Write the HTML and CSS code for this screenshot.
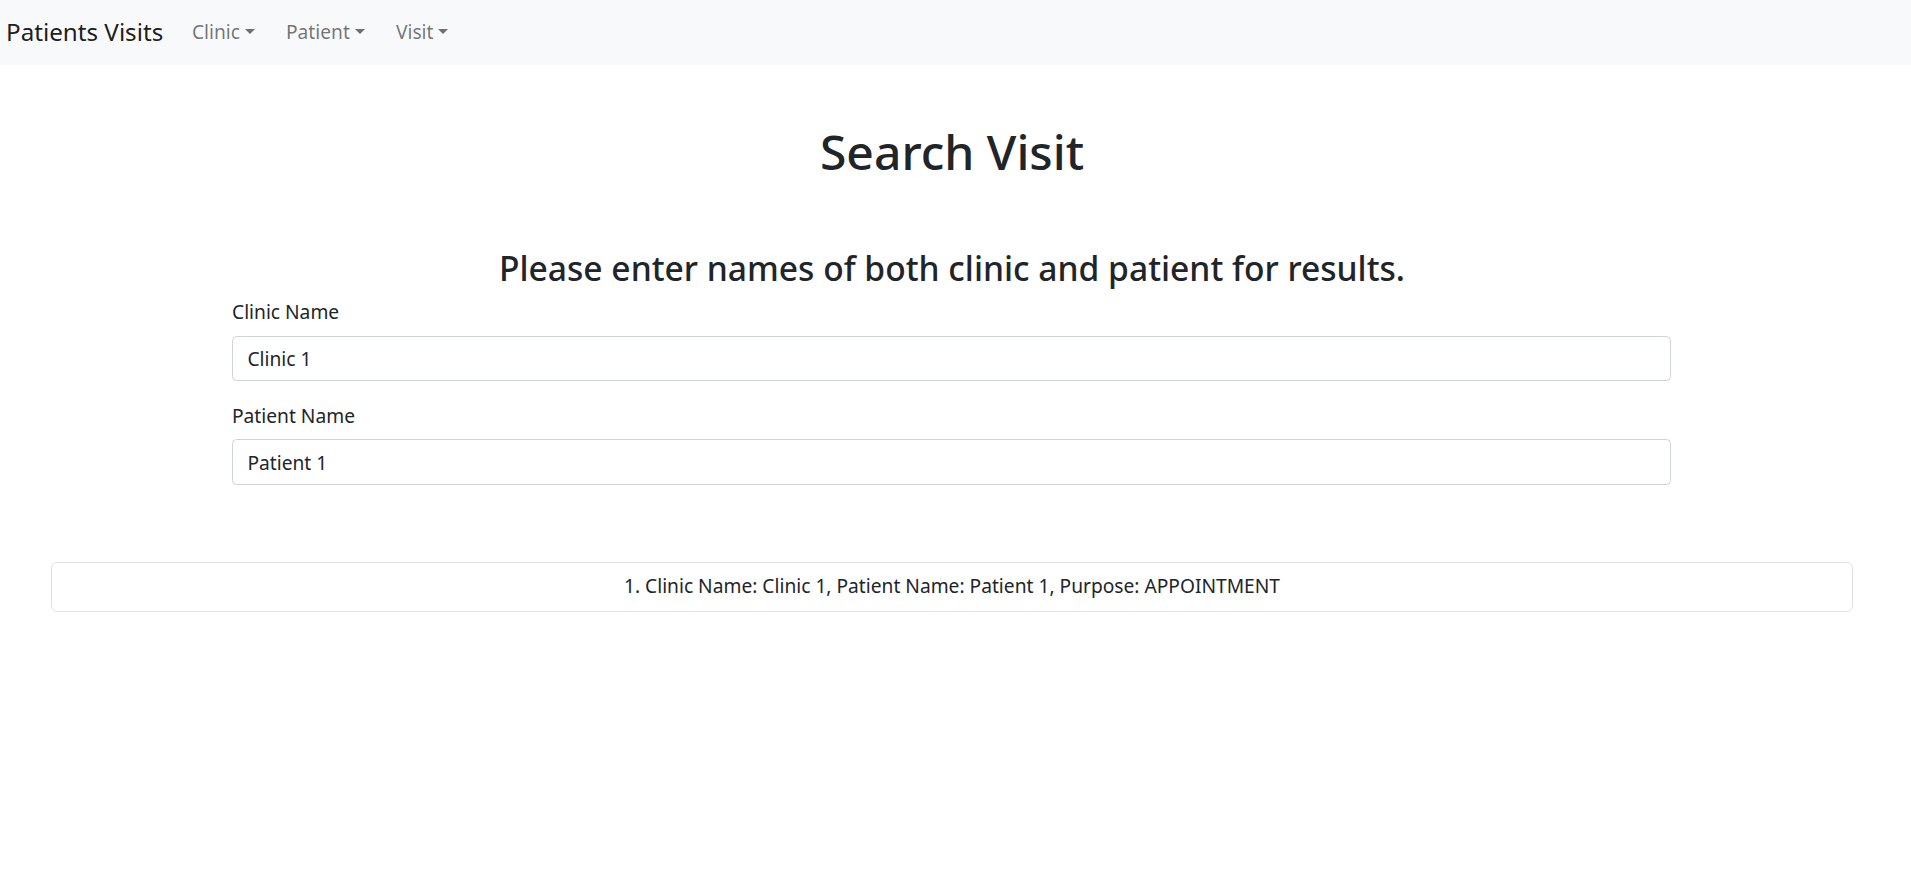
FILE: index.html
```html
<!DOCTYPE html>
<html lang="en">
<head>
<meta charset="utf-8">
<title>Patients Visits</title>
<link rel="stylesheet" href="styles.css">
</head>
<body>
<nav class="navbar">
  <a class="brand" href="#">Patients Visits</a>
  <ul class="nav">
    <li><a class="nav-link" href="#">Clinic<span class="caret"></span></a></li>
    <li><a class="nav-link" href="#">Patient<span class="caret"></span></a></li>
    <li><a class="nav-link" href="#">Visit<span class="caret"></span></a></li>
  </ul>
</nav>
<main class="page">
  <h1 class="title">Search Visit</h1>
  <h3 class="subtitle">Please enter names of both clinic and patient for results.</h3>
  <form class="form">
    <div class="field">
      <label class="label" for="clinic">Clinic Name</label>
      <input class="input" id="clinic" type="text" value="Clinic 1">
    </div>
    <div class="field">
      <label class="label" for="patient">Patient Name</label>
      <input class="input" id="patient" type="text" value="Patient 1">
    </div>
  </form>
  <ul class="results">
    <li class="result">1. Clinic Name: Clinic 1, Patient Name: Patient 1, Purpose: APPOINTMENT</li>
  </ul>
</main>
</body>
</html>
```
FILE: styles.css
```css
html, body {
  margin: 0;
  padding: 0;
  background: #fff;
}
body {
  font-family: "Noto Sans", "Open Sans", sans-serif;
  font-size: 19.2px;
  line-height: 1.5;
  color: #212529;
}
.navbar {
  display: flex;
  align-items: center;
  height: 65px;
  background: #f8f9fa;
  padding-left: 6px;
  padding-bottom: 1px;
  box-sizing: border-box;
}
.brand {
  font-size: 24.2px;
  line-height: 36px;
  color: rgba(0, 0, 0, 0.9);
  text-decoration: none;
  margin-right: 13px;
}
.nav {
  display: flex;
  list-style: none;
  margin: 0;
  padding: 0;
}
.nav-link {
  display: block;
  padding: 0 15.6px;
  line-height: 28.8px;
  color: rgba(0, 0, 0, 0.55);
  text-decoration: none;
}
.caret {
  display: inline-block;
  margin-left: 0.255em;
  vertical-align: 0.255em;
  border-top: 0.3em solid;
  border-right: 0.3em solid transparent;
  border-left: 0.3em solid transparent;
  border-bottom: 0;
}
.page {
  width: 1904px;
}
.title {
  margin: 58px 0 0;
  font-size: 48px;
  line-height: 1.2;
  font-weight: 500;
  text-align: center;
}
.subtitle {
  margin: 67px 0 10.4px;
  font-size: 33.6px;
  line-height: 1.2;
  font-weight: 500;
  text-align: center;
}
.form {
  margin: 0 233px 0 232px;
  display: flex;
  flex-direction: column;
  gap: 20.2px;
}
.field {
  display: flex;
  flex-direction: column;
}
.label {
  margin-bottom: 8.8px;
}
.input {
  font-family: inherit;
  font-size: 19.2px;
  line-height: 1.5;
  color: #212529;
  padding: 6.4px 14.4px;
  border: 1px solid #ced4da;
  border-radius: 4.5px;
  background: #fff;
  height: 45.6px;
  box-sizing: border-box;
}
.results {
  list-style: none;
  margin: 77px 51px 0;
  padding: 0;
}
.result {
  border: 1px solid #dee2e6;
  border-radius: 6px;
  padding: 9.6px 19.2px;
  text-align: center;
}
```
